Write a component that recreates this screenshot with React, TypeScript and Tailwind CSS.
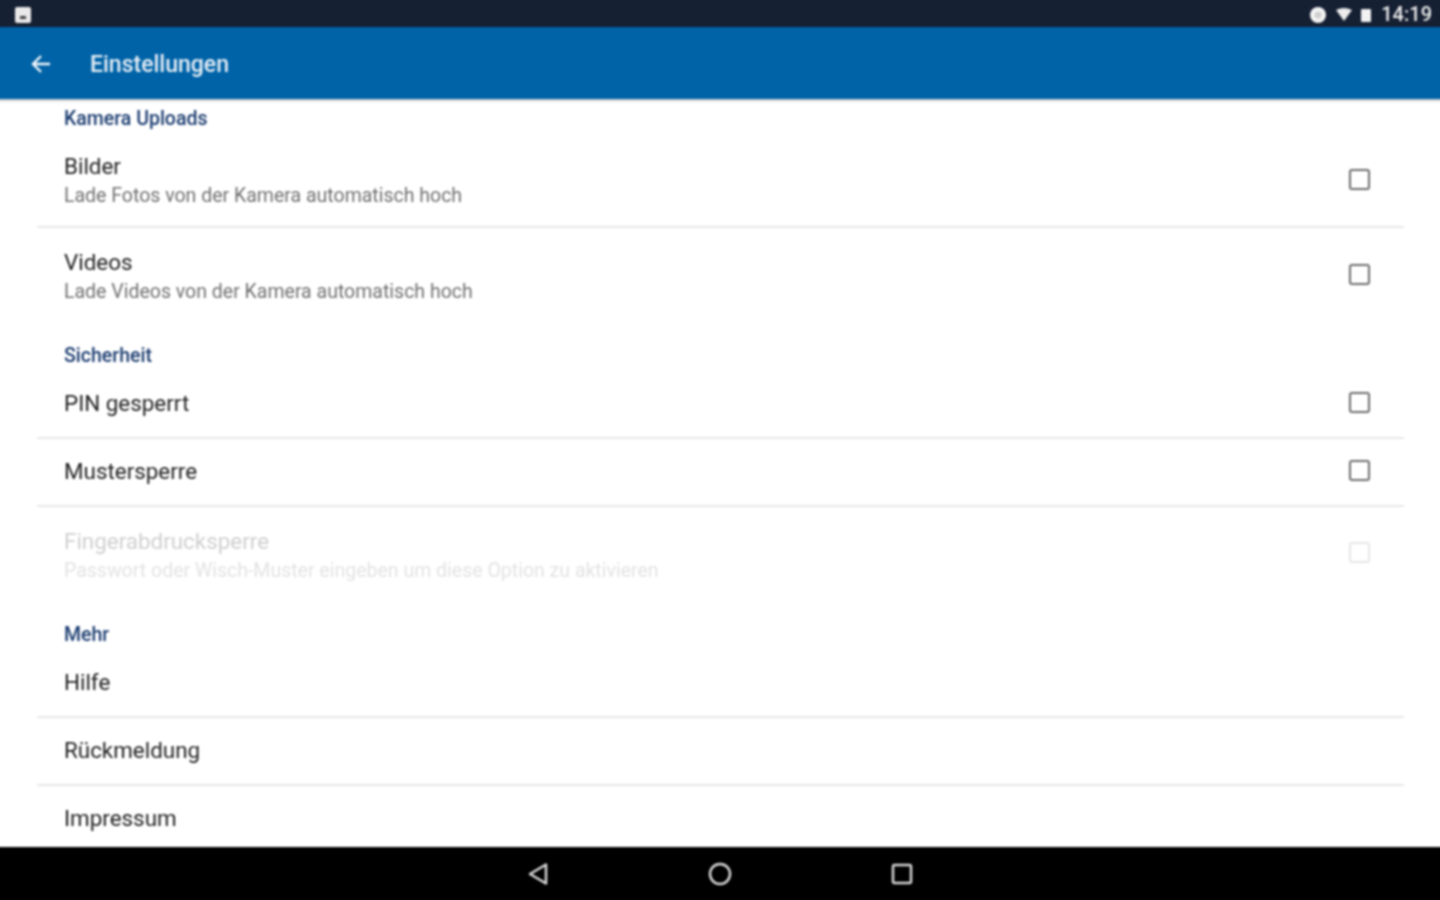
import React from "react";

function Label({ text, first }: { text: string; first?: boolean }) {
  return (
    <div className={first ? "h-[32px] shrink-0 pt-[9px] pl-[68px] text-[19.5px] leading-[22px] font-medium text-[#1b3c70]" : "h-[47px] shrink-0 pt-[22px] pl-[68px] text-[19.5px] leading-[22px] font-medium text-[#1b3c70]"}>
      {text}
    </div>
  );
}

function Box({ disabled, lift }: { disabled?: boolean; lift: string }) {
  return (
    <div className={`${lift} mr-[74px] h-[21px] w-[21px] shrink-0 rounded-[3px] border-2 ${disabled ? "border-[#e6e6e6]" : "border-[#6c6c6c]"}`} />
  );
}

function Row({ title, sub, box, disabled, divider, lift = "mb-[4px]" }: { title: string; sub?: string; box?: boolean; disabled?: boolean; divider?: boolean; lift?: string }) {
  return (
    <div className={`relative flex shrink-0 items-center justify-between pl-[68px] ${sub ? "h-[96px]" : "h-[68px]"}`}>
      <div className={sub ? "pt-[3px]" : "pb-[2px]"}>
        <div className={`text-[22.4px] leading-[30px] ${disabled ? "text-[#cfcfcf]" : "text-[#1f1f1f]"}`}>{title}</div>
        {sub && <div className={`mt-[1px] text-[19.5px] leading-[28px] ${disabled ? "text-[#e3e3e3]" : "text-[#707070]"}`}>{sub}</div>}
      </div>
      {box && <Box disabled={disabled} lift={lift} />}
      {divider && <div className="absolute bottom-[-1px] left-[41px] right-[40px] h-[2px] bg-[#e8e8e8]" />}
    </div>
  );
}

export default function App() {
  return (
    <div className="h-[900px] w-[1440px] overflow-hidden bg-white" style={{ fontFamily: "Roboto, 'Noto Sans', sans-serif" }}>
      <div className="-m-[4px] flex h-[908px] w-[1448px] flex-col blur-[0.8px]">
        <div className="flex h-[31px] shrink-0 items-center justify-between bg-[#162033] pl-[18px] pr-[12px] pt-[6px] text-white">
          <svg width="18" height="18" viewBox="0 0 18 18">
            <rect x="1" y="1" width="16" height="16" rx="2" fill="#e9e9e9" />
            <rect x="6" y="10" width="6" height="3" fill="#444" />
          </svg>
          <div className="flex items-center">
            <svg width="18" height="18" viewBox="0 0 18 18" className="mr-[9px]">
              <circle cx="9" cy="9" r="8" fill="#f4f4f4" />
              <circle cx="9" cy="9" r="3.5" fill="#cfcfcf" />
            </svg>
            <svg width="16" height="14" viewBox="0 0 16 14" className="mr-[8px]">
              <path d="M0 2 Q8 -2 16 2 L8 13 Z" fill="#ececec" />
            </svg>
            <svg width="12" height="14" viewBox="0 0 12 14" className="mr-[9px]">
              <rect x="1" y="1" width="10" height="13" rx="1" fill="#f2f2f2" />
            </svg>
            <span className="text-[20px] font-medium leading-[25px] text-[#ececec]">14:19</span>
          </div>
        </div>
        <div className="z-10 flex h-[72px] shrink-0 items-center bg-[#0063a8] pl-[35px] pt-[4px] shadow-[0_1px_3px_rgba(0,0,0,0.35)]">
          <svg width="20" height="20" viewBox="0 0 20 20" fill="none" stroke="#f2f6fa" strokeWidth="2.4" className="mb-[3px]">
            <path d="M19 10H2M10 2l-8 8 8 8" />
          </svg>
          <span className="ml-[39px] text-[23px] font-medium leading-[30px] text-[#e6eef6]">Einstellungen</span>
        </div>
        <div className="flex min-h-0 flex-1 flex-col overflow-hidden">
          <Label text="Kamera Uploads" first />
          <Row title="Bilder" sub="Lade Fotos von der Kamera automatisch hoch" box divider lift="" />
          <Row title="Videos" sub="Lade Videos von der Kamera automatisch hoch" box lift="mb-[2px]" />
          <Label text="Sicherheit" />
          <Row title="PIN gesperrt" box divider />
          <Row title="Mustersperre" box divider />
          <Row title="Fingerabdrucksperre" sub="Passwort oder Wisch-Muster eingeben um diese Option zu aktivieren" box disabled />
          <Label text="Mehr" />
          <Row title="Hilfe" divider />
          <Row title="Rückmeldung" divider />
          <Row title="Impressum" />
        </div>
        <div className="relative z-10 flex h-[57px] shrink-0 items-center justify-center gap-[159px] bg-black pb-[4px]">
          <svg width="22" height="24" viewBox="0 0 22 24" fill="none" stroke="#d8d8d8" strokeWidth="2.5" strokeLinejoin="round">
            <path d="M19 2.5V21.5L3 12Z" />
          </svg>
          <svg width="24" height="24" viewBox="0 0 24 24" fill="none" stroke="#d8d8d8" strokeWidth="2.5">
            <circle cx="12" cy="12" r="10" />
          </svg>
          <svg width="22" height="22" viewBox="0 0 22 22" fill="none" stroke="#d8d8d8" strokeWidth="2.5">
            <rect x="2" y="2" width="18" height="18" rx="1.5" />
          </svg>
        </div>
      </div>
    </div>
  );
}
